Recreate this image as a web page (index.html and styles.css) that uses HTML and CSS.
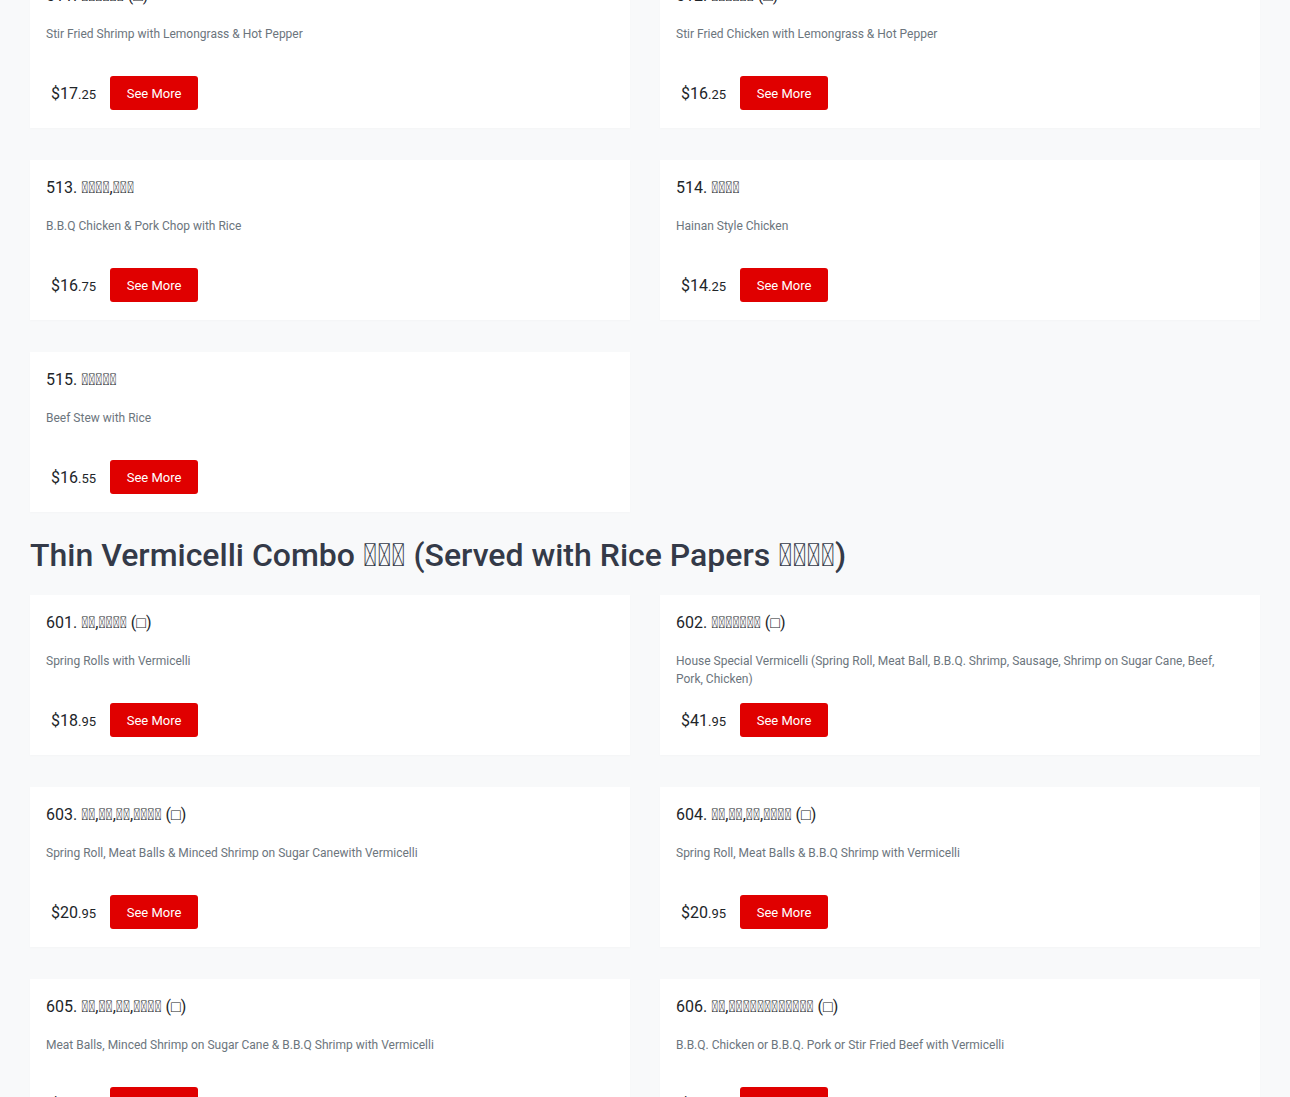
FILE: index.html
```html
<!DOCTYPE html>
<html>
<head>
<meta charset="utf-8">
<link rel="stylesheet" href="styles.css">
</head>
<body>
<div class="page">
  <div class="grid first">
    <div class="card"><div class="title">511. &#xE000;&#xE000;&#xE000;&#xE000;&#xE000;&#xE000; (□)</div><div class="desc">Stir Fried Shrimp with Lemongrass &amp; Hot Pepper</div><div class="row"><span class="price">$17<small>.25</small></span><button class="btn">See More</button></div></div>
    <div class="card"><div class="title">512. &#xE000;&#xE000;&#xE000;&#xE000;&#xE000;&#xE000; (□)</div><div class="desc">Stir Fried Chicken with Lemongrass &amp; Hot Pepper</div><div class="row"><span class="price">$16<small>.25</small></span><button class="btn">See More</button></div></div>
    <div class="card"><div class="title">513. &#xE000;&#xE000;&#xE000;&#xE000;,&#xE000;&#xE000;&#xE000;</div><div class="desc">B.B.Q Chicken &amp; Pork Chop with Rice</div><div class="row"><span class="price">$16<small>.75</small></span><button class="btn">See More</button></div></div>
    <div class="card"><div class="title">514. &#xE000;&#xE000;&#xE000;&#xE000;</div><div class="desc">Hainan Style Chicken</div><div class="row"><span class="price">$14<small>.25</small></span><button class="btn">See More</button></div></div>
    <div class="card"><div class="title">515. &#xE000;&#xE000;&#xE000;&#xE000;&#xE000;</div><div class="desc">Beef Stew with Rice</div><div class="row"><span class="price">$16<small>.55</small></span><button class="btn">See More</button></div></div>
  </div>
  <h2 class="section">Thin Vermicelli Combo &#xE000;&#xE000;&#xE000; (Served with Rice Papers &#xE000;&#xE000;&#xE000;&#xE000;)</h2>
  <div class="grid">
    <div class="card"><div class="title">601. &#xE000;&#xE000;,&#xE000;&#xE000;&#xE000;&#xE000; (□)</div><div class="desc">Spring Rolls with Vermicelli</div><div class="row"><span class="price">$18<small>.95</small></span><button class="btn">See More</button></div></div>
    <div class="card"><div class="title">602. &#xE000;&#xE000;&#xE000;&#xE000;&#xE000;&#xE000;&#xE000; (□)</div><div class="desc">House Special Vermicelli (Spring Roll, Meat Ball, B.B.Q. Shrimp, Sausage, Shrimp on Sugar Cane, Beef, Pork, Chicken)</div><div class="row"><span class="price">$41<small>.95</small></span><button class="btn">See More</button></div></div>
    <div class="card"><div class="title">603. &#xE000;&#xE000;,&#xE000;&#xE000;,&#xE000;&#xE000;,&#xE000;&#xE000;&#xE000;&#xE000; (□)</div><div class="desc">Spring Roll, Meat Balls &amp; Minced Shrimp on Sugar Canewith Vermicelli</div><div class="row"><span class="price">$20<small>.95</small></span><button class="btn">See More</button></div></div>
    <div class="card"><div class="title">604. &#xE000;&#xE000;,&#xE000;&#xE000;,&#xE000;&#xE000;,&#xE000;&#xE000;&#xE000;&#xE000; (□)</div><div class="desc">Spring Roll, Meat Balls &amp; B.B.Q Shrimp with Vermicelli</div><div class="row"><span class="price">$20<small>.95</small></span><button class="btn">See More</button></div></div>
    <div class="card"><div class="title">605. &#xE000;&#xE000;,&#xE000;&#xE000;,&#xE000;&#xE000;,&#xE000;&#xE000;&#xE000;&#xE000; (□)</div><div class="desc">Meat Balls, Minced Shrimp on Sugar Cane &amp; B.B.Q Shrimp with Vermicelli</div><div class="row"><span class="price">$18<small>.95</small></span><button class="btn">See More</button></div></div>
    <div class="card"><div class="title">606. &#xE000;&#xE000;,&#xE000;&#xE000;&#xE000;&#xE000;&#xE000;&#xE000;&#xE000;&#xE000;&#xE000;&#xE000;&#xE000;&#xE000; (□)</div><div class="desc">B.B.Q. Chicken or B.B.Q. Pork or Stir Fried Beef with Vermicelli</div><div class="row"><span class="price">$17<small>.95</small></span><button class="btn">See More</button></div></div>
  </div>
</div>
</body>
</html>
```

FILE: styles.css
```css
html, body {
  margin: 0;
  padding: 0;
  background: #f8f9fa;
  font-family: Roboto, "Liberation Sans", sans-serif;
  color: #212529;
}
.page {
  padding: 0 30px 40px;
}
.grid {
  display: grid;
  grid-template-columns: 600px 600px;
  column-gap: 30px;
  row-gap: 32px;
}
.grid.first {
  margin-top: -32px;
}
.card {
  background: #fff;
  box-sizing: border-box;
  height: 160px;
  padding: 16px 16px 18px;
  box-shadow: 0 1px 2px rgba(0, 0, 0, 0.02);
}
.title {
  font-size: 16px;
  line-height: 24px;
  color: #212529;
  white-space: nowrap;
}
.desc {
  margin-top: 17px;
  font-size: 12px;
  line-height: 18px;
  height: 36px;
  color: #6c757d;
}
.row {
  margin-top: 15px;
  display: flex;
  align-items: center;
  gap: 14px;
}
.price {
  padding-left: 5px;
  font-size: 16px;
  color: #212529;
}
.price small {
  font-size: 13px;
}
.btn {
  background: #e00000;
  color: #fff;
  border: none;
  border-radius: 3px;
  height: 34px;
  width: 88px;
  padding: 0;
  font-family: Roboto, "Liberation Sans", sans-serif;
  font-size: 13px;
  cursor: pointer;
}
.section {
  margin: 24px 0 21px;
  font-size: 32px;
  line-height: 38px;
  font-weight: 500;
  color: #343a48;
}
```
